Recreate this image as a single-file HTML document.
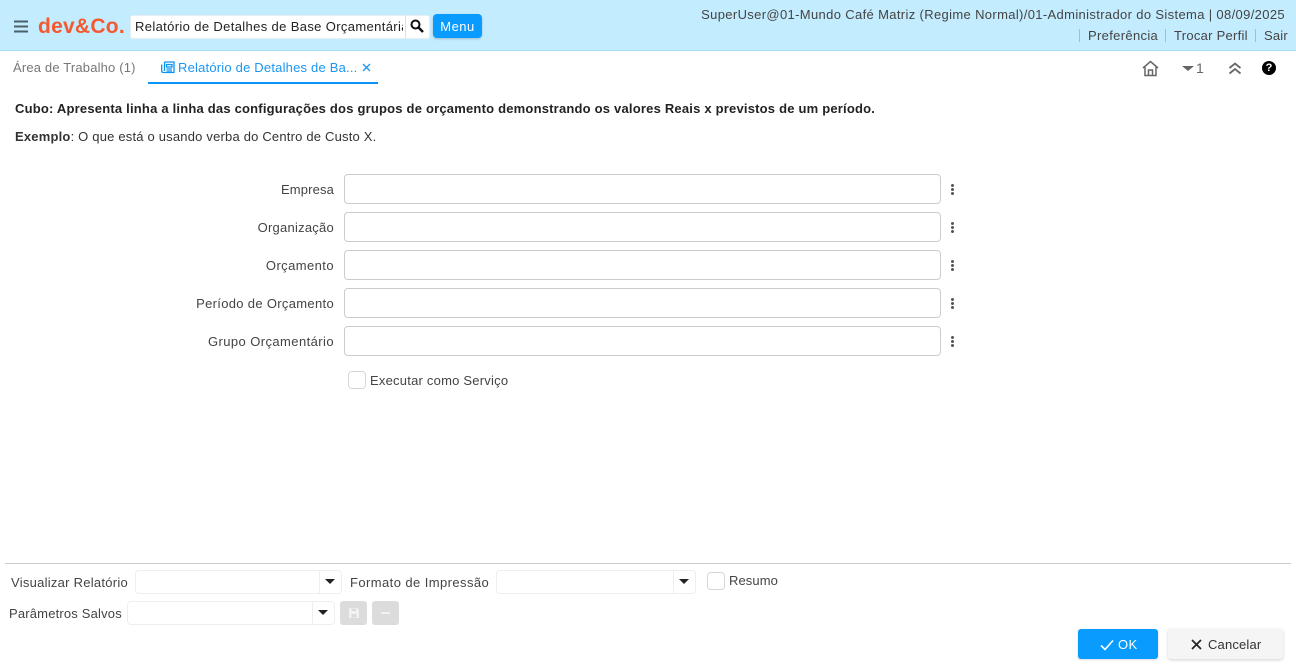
<!DOCTYPE html>
<html lang="pt"><head><meta charset="utf-8"><title>Relatório</title>
<style>
html,body{margin:0;padding:0;width:1296px;height:671px;overflow:hidden;background:#fff}
body{font-family:"Liberation Sans",sans-serif;font-size:13px;color:#333;position:relative}
.a{position:absolute;white-space:nowrap}
.t{position:absolute;white-space:nowrap;line-height:18px}
.inp{position:absolute;left:344px;width:595px;height:28px;border:1px solid #ccc;border-radius:4px;background:#fff}
.lbl{position:absolute;right:962px;white-space:nowrap;line-height:18px;color:#444}
.dots{position:absolute;left:951px;width:3px;height:11px}
.dots i{display:block;width:3px;height:3px;background:#555;border-radius:50%;margin-bottom:1px}
.sel{position:absolute;height:22px;border:1px solid #eceff1;border-radius:4px;background:#fff}
.sel:after{content:"";position:absolute;right:21px;top:0;bottom:0;width:1px;background:#eceff1}
.sel b{position:absolute;right:6px;top:8px;border-left:5px solid transparent;border-right:5px solid transparent;border-top:5px solid #222}
.cb{position:absolute;width:16px;height:16px;border:1px solid #d6d6d6;border-radius:4px;background:#fff}
.gb{position:absolute;top:601px;width:27px;height:24px;background:#dcdcdc;border-radius:3px}
</style></head><body>
<div class="a" style="left:0;top:0;width:1296px;height:50px;background:#c3ecff;border-bottom:1px solid #a9dcf7"></div>
<svg class="a" style="left:14px;top:20px" width="15" height="14"><path d="M0 1.500H14M0 6.500H14M0 11.500H14" stroke="#4a5f68" stroke-width="2"/></svg>
<div class="t" style="left:38px;top:14px;font-size:21px;line-height:26px;font-weight:bold;color:#f4592f;letter-spacing:.25px">dev&amp;Co.</div>
<div class="a" style="left:130px;top:15px;width:298px;height:22px;background:#fff;border-radius:3px;border:1px solid #e6eef2"></div>
<div class="a" style="left:405px;top:15px;width:1px;height:24px;background:#dde"></div>
<div class="t" style="left:135px;top:18px;width:268px;overflow:hidden;color:#222;letter-spacing:.36px">Relatório de Detalhes de Base Orçamentária</div>
<svg class="a" style="left:410px;top:19px" width="14" height="14"><circle cx="5.500" cy="5.500" r="4" fill="none" stroke="#111" stroke-width="2"/><path d="M8.500 8.500L13 13" stroke="#111" stroke-width="2.500"/></svg>
<div class="a" style="left:433px;top:14px;width:49px;height:24px;background:#0a9bff;border-radius:4px;box-shadow:0 1px 2px rgba(0,0,0,.2);color:#fff;text-align:center;line-height:25px;letter-spacing:.5px">Menu</div>
<div class="t" style="right:11px;top:6px;color:#444;letter-spacing:.35px">SuperUser@01-Mundo Café Matriz (Regime Normal)/01-Administrador do Sistema | 08/09/2025</div>
<div class="t" style="left:1088px;top:27px;color:#444;letter-spacing:.33px">Preferência</div>
<div class="t" style="left:1174px;top:27px;color:#444;letter-spacing:.27px">Trocar Perfil</div>
<div class="t" style="left:1264px;top:27px;color:#444;letter-spacing:.2px">Sair</div>
<div class="a" style="left:1079px;top:29px;width:1px;height:13px;background:#a9bcc6"></div>
<div class="a" style="left:1165px;top:29px;width:1px;height:13px;background:#a9bcc6"></div>
<div class="a" style="left:1255px;top:29px;width:1px;height:13px;background:#a9bcc6"></div>

<div class="t" style="left:13px;top:59px;color:#777;letter-spacing:.17px">Área de Trabalho (1)</div>
<svg class="a" style="left:161px;top:61px" width="14" height="13" fill="none" stroke="#0a94f5" stroke-width="1.300"><path d="M3.500 1H13V11.500H2A1.500 1.500 0 0 1 .7 10V3.500M3.500 1V10"/><path d="M5.500 3.500H11V6H5.500ZM5.500 8H11M5.500 10H11"/></svg>
<div class="t" style="left:178px;top:59px;color:#1b96f2;letter-spacing:.2px">Relatório de Detalhes de Ba...</div>
<svg class="a" style="left:362px;top:63px" width="9" height="9"><path d="M1 1L8 8M8 1L1 8" stroke="#1b96f2" stroke-width="1.300"/></svg>
<div class="a" style="left:148px;top:82px;width:230px;height:2px;background:#0a94f5"></div>

<svg class="a" style="left:1142px;top:60px" width="17" height="17" fill="none" stroke="#666" stroke-width="1.500"><path d="M1 8L8.500 1.500L16 8"/><path d="M3 7V15.500H14V7"/><path d="M6.500 15V10H10.500V15"/></svg>
<div class="a" style="left:1182px;top:66px;border-left:6px solid transparent;border-right:6px solid transparent;border-top:5px solid #666"></div>
<div class="t" style="left:1196px;top:59px;font-size:14px;color:#666">1</div>
<svg class="a" style="left:1228px;top:62px" width="14" height="13" fill="none" stroke="#666" stroke-width="1.800"><path d="M1.500 6L7 1.500L12.500 6M1.500 11.500L7 7L12.500 11.500"/></svg>
<div class="a" style="left:1262px;top:61px;width:14px;height:14px;border-radius:50%;background:#000;color:#fff;font-weight:bold;font-size:11px;line-height:14px;text-align:center">?</div>

<div class="t" style="left:15px;top:100px;font-weight:bold;color:#222;letter-spacing:.205px">Cubo: Apresenta linha a linha das configurações dos grupos de orçamento demonstrando os valores Reais x previstos de um período.</div>
<div class="t" style="left:15px;top:128px;color:#333;letter-spacing:.195px"><b>Exemplo</b>: O que está o usando verba do Centro de Custo X.</div>

<div class="lbl" style="top:181px;letter-spacing:.14px">Empresa</div><div class="inp" style="top:174px"></div>
<div class="lbl" style="top:219px;letter-spacing:.24px">Organização</div><div class="inp" style="top:212px"></div>
<div class="lbl" style="top:257px;letter-spacing:.42px">Orçamento</div><div class="inp" style="top:250px"></div>
<div class="lbl" style="top:295px;letter-spacing:.32px">Período de Orçamento</div><div class="inp" style="top:288px"></div>
<div class="lbl" style="top:333px;letter-spacing:.42px">Grupo Orçamentário</div><div class="inp" style="top:326px"></div>
<div class="dots" style="top:184px"><i></i><i></i><i></i></div>
<div class="dots" style="top:222px"><i></i><i></i><i></i></div>
<div class="dots" style="top:260px"><i></i><i></i><i></i></div>
<div class="dots" style="top:298px"><i></i><i></i><i></i></div>
<div class="dots" style="top:336px"><i></i><i></i><i></i></div>

<div class="cb" style="left:348px;top:371px"></div>
<div class="t" style="left:370px;top:372px;color:#444;letter-spacing:.22px">Executar como Serviço</div>

<div class="a" style="left:5px;top:563px;width:1286px;height:1px;background:#ccc"></div>
<div class="t" style="left:11px;top:574px;color:#444;letter-spacing:.26px">Visualizar Relatório</div>
<div class="sel" style="left:135px;top:570px;width:205px"><b></b></div>
<div class="t" style="left:350px;top:574px;color:#444;letter-spacing:.42px">Formato de Impressão</div>
<div class="sel" style="left:496px;top:570px;width:198px"><b></b></div>
<div class="cb" style="left:707px;top:572px"></div>
<div class="t" style="left:729px;top:572px;color:#444;letter-spacing:.09px">Resumo</div>
<div class="t" style="left:9px;top:605px;color:#444;letter-spacing:.18px">Parâmetros Salvos</div>
<div class="sel" style="left:127px;top:601px;width:206px"><b></b></div>
<div class="gb" style="left:340px"></div>
<svg class="a" style="left:348px;top:607px" width="12" height="12"><path d="M1 1H9L11 3V11H1Z" fill="#f2f2f2"/><path d="M3.500 1.500H8V4H3.500ZM3.500 7H8.500V10.500H3.500Z" fill="#dcdcdc"/></svg>
<div class="gb" style="left:372px"></div>
<div class="a" style="left:381px;top:612px;width:9px;height:2px;background:#f2f2f2"></div>

<div class="a" style="left:1078px;top:629px;width:80px;height:30px;background:#0a9bff;border-radius:3px;box-shadow:0 1px 2px rgba(0,0,0,.15)"></div>
<svg class="a" style="left:1100px;top:639px" width="14" height="12"><path d="M1 6.500L5 10.500L13 1.500" fill="none" stroke="#fff" stroke-width="1.600"/></svg>
<div class="t" style="left:1118px;top:636px;color:#fff;letter-spacing:.45px">OK</div>
<div class="a" style="left:1168px;top:629px;width:115px;height:30px;background:#f5f5f5;border-radius:3px;box-shadow:0 1px 3px rgba(0,0,0,.18)"></div>
<svg class="a" style="left:1191px;top:639px" width="11" height="11"><path d="M1 1L10 10M10 1L1 10" stroke="#222" stroke-width="1.700"/></svg>
<div class="t" style="left:1208px;top:636px;color:#333;letter-spacing:.17px">Cancelar</div>
</body></html>
